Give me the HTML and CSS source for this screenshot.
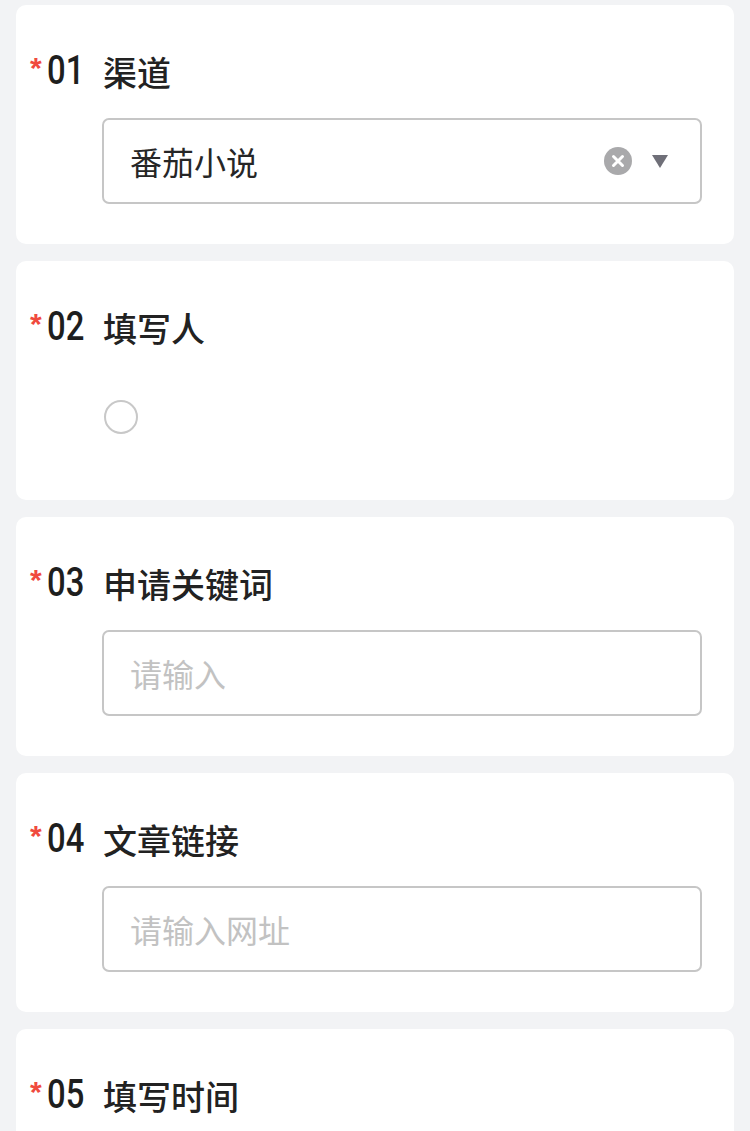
FILE: index.html
```html
<!DOCTYPE html>
<html lang="zh-CN">
<head>
<meta charset="utf-8">
<title>表单</title>
<link rel="stylesheet" href="styles.css">
</head>
<body>
<div class="page">
  <section class="card">
    <div class="label"><span class="req">*</span><span class="num"><span class="digits">01</span></span><span class="title">渠道</span></div>
    <div class="field select">
      <span class="value">番茄小说</span>
      <span class="actions">
        <svg class="clear" width="28" height="28" viewBox="0 0 28 28"><circle cx="14" cy="14" r="14" fill="#a9a9ab"/><path d="M9.5 9.5 L18.5 18.5 M18.5 9.5 L9.5 18.5" stroke="#fff" stroke-width="3" stroke-linecap="round"/></svg>
        <svg class="caret" width="16" height="13" viewBox="0 0 16 13"><path d="M0 0 H16 L8 13 Z" fill="#6f6f78"/></svg>
      </span>
    </div>
  </section>
  <section class="card">
    <div class="label"><span class="req">*</span><span class="num"><span class="digits">02</span></span><span class="title">填写人</span></div>
    <div class="radio-row"><span class="radio"></span></div>
  </section>
  <section class="card">
    <div class="label"><span class="req">*</span><span class="num"><span class="digits">03</span></span><span class="title">申请关键词</span></div>
    <div class="field"><span class="placeholder">请输入</span></div>
  </section>
  <section class="card">
    <div class="label"><span class="req">*</span><span class="num"><span class="digits">04</span></span><span class="title">文章链接</span></div>
    <div class="field"><span class="placeholder">请输入网址</span></div>
  </section>
  <section class="card">
    <div class="label"><span class="req">*</span><span class="num"><span class="digits">05</span></span><span class="title">填写时间</span></div>
  </section>
</div>
</body>
</html>
```
FILE: styles.css
```css
html, body {
  margin: 0;
  padding: 0;
  background: #f2f3f5;
}
body {
  font-family: "Noto Sans CJK SC", "Noto Sans", sans-serif;
  color: #222;
}
.page {
  padding: 5px 16px 0 16px;
  display: flex;
  flex-direction: column;
  gap: 17px;
}
.card {
  background: #fff;
  border-radius: 10px;
  height: 239px;
  box-sizing: border-box;
  padding: 43px 32px 0 14px;
  display: flex;
  flex-direction: column;
  gap: 22px;
  flex-shrink: 0;
}
.label {
  display: flex;
  align-items: center;
  height: 48px;
}
.req {
  color: #f04a3e;
  font-family: "Liberation Sans", sans-serif;
  font-size: 30px;
  font-weight: bold;
  width: 17px;
  align-self: flex-start;
  line-height: 1;
  margin-top: 5px;
}
.num {
  width: 56px;
  line-height: 48px;
  padding-top: 4px;
}
.digits {
  display: inline-block;
  font-family: "Roboto", "Liberation Sans", sans-serif;
  font-size: 40px;
  font-weight: 500;
  color: #1e1e1e;
  transform: scaleX(0.82);
  transform-origin: left center;
}
.title {
  font-size: 34px;
  font-weight: 500;
  line-height: 48px;
  color: #222;
}
.field {
  margin-left: 72px;
  height: 86px;
  box-sizing: border-box;
  border: 2px solid #c6c6c6;
  border-radius: 7px;
  display: flex;
  align-items: center;
  padding: 0 32px 0 26px;
  font-size: 32px;
}
.value {
  flex: 1;
  color: #262626;
}
.placeholder {
  color: #c2c2c2;
}
.actions {
  display: flex;
  align-items: center;
  gap: 20px;
}
.clear, .caret {
  display: block;
}
.radio-row {
  margin-left: 74px;
  height: 86px;
  display: flex;
  align-items: center;
}
.radio {
  width: 34px;
  height: 34px;
  box-sizing: border-box;
  border: 2px solid #c8c8c8;
  border-radius: 50%;
}
```
